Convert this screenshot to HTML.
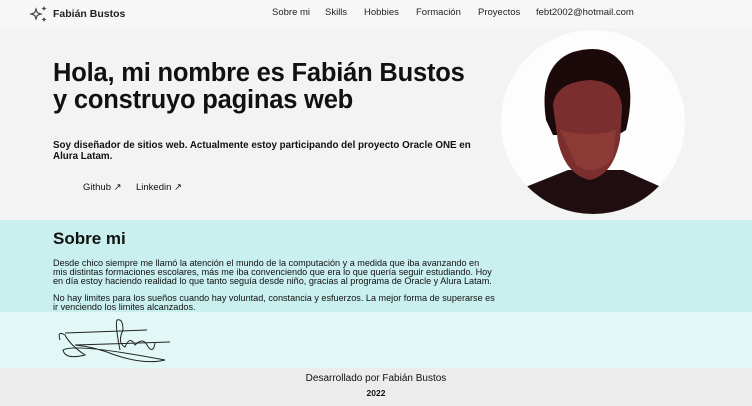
<!DOCTYPE html>
<html><head><meta charset="utf-8"><style>
*{margin:0;padding:0;box-sizing:border-box}
body{width:752px;height:406px;overflow:hidden;font-family:"Liberation Sans",sans-serif;color:#111;background:#f3f3f3;position:relative}
.abs{position:absolute;white-space:nowrap}
header{position:absolute;left:0;top:0;width:752px;height:28px;background:#f7f7f7}
nav span{position:absolute;top:7px;font-size:9.5px;color:#222}
#hero{position:absolute;top:28px;left:0;width:752px;height:192px;background:#f3f3f3}
#about{position:absolute;top:220px;left:0;width:752px;height:92px;background:#c9efee}
#sig{position:absolute;top:312px;left:0;width:752px;height:56px;background:#e1f8f7}
footer{position:absolute;top:368px;left:0;width:752px;height:38px;background:#ececec}
h1{position:absolute;left:53px;top:60px;font-size:25.5px;line-height:27px;font-weight:bold;letter-spacing:-0.2px}
.p{position:absolute;left:53px;white-space:nowrap;font-size:9.1px;line-height:9px}
</style></head><body>
<header>
<svg class="abs" style="left:29px;top:5px" width="20" height="18" viewBox="0 0 20 18"><path d="M7 4 L8.3 7.7 L12 9 L8.3 10.3 L7 14 L5.7 10.3 L2 9 L5.7 7.7Z" fill="none" stroke="#444" stroke-width="1.2"/><path d="M15 1 l.8 1.7 1.7.8-1.7.8-.8 1.7-.8-1.7-1.7-.8 1.7-.8z M15 12 l.8 1.7 1.7.8-1.7.8-.8 1.7-.8-1.7-1.7-.8 1.7-.8z" fill="#444"/></svg>
<div class="abs" style="left:53px;top:8px;font-size:10.5px;font-weight:bold;color:#222">Fabián Bustos</div>
<nav><span style="left:272px">Sobre mi</span><span style="left:325px">Skills</span><span style="left:364px">Hobbies</span><span style="left:416px">Formación</span><span style="left:478px">Proyectos</span><span style="left:536px">febt2002@hotmail.com</span></nav>
</header>
<div id="hero"></div>
<h1>Hola, mi nombre es Fabián Bustos<br>y construyo paginas web</h1>
<div class="abs" style="left:53px;top:140px;font-size:9.8px;line-height:11px;font-weight:bold">Soy diseñador de sitios web. Actualmente estoy participando del proyecto Oracle ONE en<br>Alura Latam.</div>
<div class="abs" style="left:83px;top:182px;font-size:9.5px">Github ↗</div>
<div class="abs" style="left:136px;top:182px;font-size:9.5px">Linkedin ↗</div>
<svg class="abs" style="left:498px;top:30px" width="191" height="185" viewBox="0 0 191 185">
<defs><clipPath id="c"><circle cx="95" cy="92" r="92"/></clipPath></defs>
<circle cx="95" cy="92" r="92" fill="#fdfdfd"/>
<g clip-path="url(#c)">
<path d="M0 185 L20 160 L70 140 L125 140 L170 160 L191 185Z" fill="#1f0d0f"/>
<path d="M48 90 Q40 35 75 22 Q110 12 125 35 Q138 60 128 100 L120 105 L55 105Z" fill="#1c0a0a"/>
<path d="M55 75 Q58 52 92 50 Q124 52 124 80 L122 110 Q115 145 92 150 Q68 145 60 112 Z" fill="#7a2f2e"/>
<path d="M62 100 Q92 108 118 100 L115 128 Q98 148 78 135Z" fill="#8b3a36"/>
</g></svg>
<div id="about"></div>
<div class="abs" style="left:53px;top:229px;font-size:17px;font-weight:bold">Sobre mi</div>
<div class="p" style="top:259px">Desde chico siempre me llamó la atención el mundo de la computación y a medida que iba avanzando en<br>mis distintas formaciones escolares, más me iba convenciendo que era lo que quería seguir estudiando. Hoy<br>en día estoy haciendo realidad lo que tanto seguía desde niño, gracias al programa de Oracle y Alura Latam.</div>
<div class="p" style="top:294px">No hay limites para los sueños cuando hay voluntad, constancia y esfuerzos. La mejor forma de superarse es<br>ir venciendo los limites alcanzados.</div>
<div id="sig"></div>
<svg class="abs" style="left:55px;top:315px" width="120" height="50" viewBox="0 0 120 50"><g fill="none" stroke="#222" stroke-width="1"><path d="M10 18 L92 15"/><path d="M5 25 Q2 15 10 20 Q15 30 30 40 Q10 45 8 35 Q20 28 110 45 Q90 50 60 40 Q40 32 20 30 L115 27"/><path d="M65 35 Q60 10 62 5 Q68 3 68 15 Q62 28 70 32 Q75 20 80 30 Q88 22 92 30 Q98 40 100 28"/></g></svg>
<footer>
<div class="abs" style="left:0;width:752px;text-align:center;top:5px;font-size:10px">Desarrollado por Fabián Bustos</div>
<div class="abs" style="left:0;width:752px;text-align:center;top:20px;font-size:8.5px;font-weight:bold">2022</div>
</footer>
</body></html>
